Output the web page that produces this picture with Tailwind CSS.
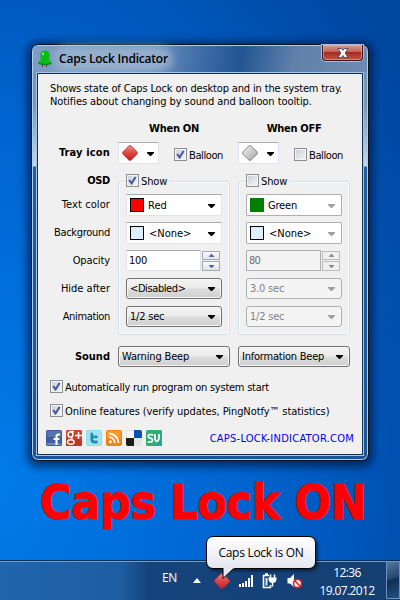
<!DOCTYPE html>
<html lang="en">
<head>
<meta charset="utf-8">
<title>Caps Lock Indicator</title>
<script src="https://cdn.jsdelivr.net/npm/@tailwindcss/browser@4"></script>
</head>
<body class="font-['DejaVu_Sans_Condensed','DejaVu_Sans',sans-serif] text-[11px] leading-[13px] text-black">
<svg class="absolute w-0 h-0">
  <defs>
    <linearGradient id="red" x1="0" y1="0" x2="0" y2="1"><stop offset="0" stop-color="#f28e8e"/><stop offset=".45" stop-color="#e04a4a"/><stop offset="1" stop-color="#c81d1d"/></linearGradient>
    <linearGradient id="gray" x1="0" y1="0" x2="1" y2="1"><stop offset="0" stop-color="#f2f2f2"/><stop offset="1" stop-color="#a2a2a2"/></linearGradient>
    <symbol id="check" viewBox="0 0 13 13"><path d="M3.2 6 L5.6 9.4 L9.6 3" fill="none" stroke="#4257a0" stroke-width="2"/></symbol>
    <symbol id="arrow" viewBox="0 0 7 4"><path d="M0 0H7V1L4 4H3L0 1Z" fill="currentColor"/></symbol>
  </defs>
</svg>
<main class="relative w-[400px] h-[600px] overflow-hidden bg-[radial-gradient(ellipse_480px_720px_at_0px_480px,#007be8_0%,#0064d0_50%,#0047a0_100%)]">

  <!-- Application window -->
  <section class="absolute left-[31px] top-[44px] w-[338px] h-[417px] flex flex-col rounded-[7px] border border-[#0a1420] px-[5px] pb-[5px] shadow-[0_2px_9px_4px_rgba(0,10,40,0.6),inset_0_0_0_1px_#b4cde6] bg-[linear-gradient(180deg,#7695bc_0px,#7896bc_60px,#c4d8ec_121px,#1f5ca2_122px,#1b5499_100%)]">
    <header class="-mx-[4px] mt-[1px] h-[26px] shrink-0 flex items-start rounded-t-[5px] bg-[linear-gradient(100deg,#7f9dc2_0%,#6e90bb_35%,#3f6da8_50%,#235493_62%,#6181ab_78%,#6d8bb2_100%)]">
      <svg class="ml-[5px] mt-[4px] shrink-0" width="14" height="18" viewBox="0 0 14 18"><path d="M4.500 14V17M8.500 14V17" stroke="#444"/><path d="M2.500 4Q3 .5 7 .5Q11 .5 11.500 4V11H13.500V14Q7 15.500 .5 14V11H2.500Z" fill="#08bc10"/><path d="M4 4Q4.500 2 6 2V5H4Z" fill="#7af07a"/><path d="M.5 12.800Q7 15 13.500 12.800V14Q7 16 .5 14Z" fill="#067d0b"/></svg>
      <h1 class="ml-[7px] mt-[5px] h-[16px] leading-[16px] w-[109px] whitespace-nowrap font-['Open_Sans','Noto_Sans',sans-serif] font-semibold text-[12px] tracking-[-0.22px] rounded-full bg-[#a3bbd6]/70 shadow-[0_0_8px_5px_rgba(163,187,214,0.7)]"><span>Caps Lock Indicator</span></h1>
      <button class="ml-auto mr-[4px] -mt-[1px] w-[41px] h-[16px] flex justify-center items-center rounded-b-[4px] border border-t-0 border-[#3c1420] shadow-[0_0_0_1px_#a9bfd8,inset_0_0_0_1px_rgba(255,190,180,0.5)] bg-[linear-gradient(180deg,#d99a94_0%,#c0645a_45%,#a52c1f_50%,#c4553f_100%)]">
        <svg width="12" height="10" viewBox="0 0 12 10"><path d="M1 .5H4.500L6 2.300 7.500 .5H11L8.200 5 11 9.500H7.500L6 7.600 4.500 9.500H1L3.800 5Z" fill="#f8f8f8" stroke="#58505c"/></svg>
      </button>
    </header>

    <div class="grow mt-[1px] flex flex-col border border-[#14304f] bg-[#f0f0f0] shadow-[0_0_0_1px_#a8c6e6] pt-[8px]">
      <p class="ml-[12px] whitespace-nowrap tracking-[-0.15px]">Shows state of Caps Lock on desktop and in the system tray.<br><span class="tracking-[-0.07px]">Notifies about changing by sound and balloon tooltip.</span></p>

      <div class="mt-[14px] h-[14px] grid grid-cols-[72px_112px_112px] gap-x-2 font-bold text-center whitespace-nowrap tracking-[-0.3px]">
        <span class="col-start-2">When ON</span>
        <span>When OFF</span>
      </div>

      <!-- Tray icon -->
      <div class="mt-[6px] h-[22px] grid grid-cols-[72px_112px_112px] gap-x-2 whitespace-nowrap">
        <b class="text-right mt-[4px] tracking-[0.15px]">Tray icon</b>
        <div class="flex">
          <div class="w-[41px] h-[22px] flex items-center bg-white border border-[#e2e3ea] border-t-[#abadb3] pl-[3px]">
            <svg width="16" height="16" viewBox="0 0 16 16"><path d="M7 .8H9L15.200 7V9L9 15.200H7L.8 9V7Z" fill="url(#red)" stroke="#c03434" stroke-width=".9"/></svg>
            <svg class="ml-[9px] mt-[1px]" width="7" height="4"><use href="#arrow"/></svg>
          </div>
          <label class="ml-[15px] mt-[6px] flex h-[13px]"><span class="w-[13px] h-[13px] border border-[#8e8f8f] bg-[linear-gradient(135deg,#c8ced8,#f6f6f6)] shadow-[inset_0_0_0_1px_#f4f4f4]"><svg class="-m-px" width="13" height="13"><use href="#check"/></svg></span><span class="ml-[2px] mt-[1px] tracking-[-0.4px]">Balloon</span></label>
        </div>
        <div class="flex">
          <div class="w-[41px] h-[22px] flex items-center bg-white border border-[#e2e3ea] border-t-[#abadb3] pl-[3px]">
            <svg width="16" height="16" viewBox="0 0 16 16"><path d="M7 .8H9L15.200 7V9L9 15.200H7L.8 9V7Z" fill="url(#gray)" stroke="#7e7e7e" stroke-width=".9"/></svg>
            <svg class="ml-[9px] mt-[1px]" width="7" height="4"><use href="#arrow"/></svg>
          </div>
          <label class="ml-[15px] mt-[6px] flex h-[13px]"><span class="w-[13px] h-[13px] border border-[#8e8f8f] bg-[linear-gradient(135deg,#c8ced8,#f6f6f6)] shadow-[inset_0_0_0_1px_#f4f4f4]"></span><span class="ml-[2px] mt-[1px] tracking-[-0.4px]">Balloon</span></label>
        </div>
      </div>

      <!-- On-screen display -->
      <div class="mt-[10px] h-[161px] grid grid-cols-[72px_112px_112px] gap-x-2 whitespace-nowrap">
        <div class="flex flex-col text-right">
          <b class="h-[24px] tracking-[-0.3px]">OSD</b>
          <span class="h-[28px] tracking-[0.1px]">Text color</span>
          <span class="h-[28px] tracking-[-0.3px]">Background</span>
          <span class="h-[28px] tracking-[-0.1px]">Opacity</span>
          <span class="h-[28px]">Hide after</span>
          <span class="tracking-[-0.35px]">Animation</span>
        </div>

        <div class="mt-[7px] h-[154px] rounded-[3px] border border-[#d5dfe5] shadow-[inset_0_0_0_1px_#fafafa] px-[7px]">
          <label class="-mt-[8px] w-[44px] flex h-[13px] bg-[#f0f0f0]"><span class="shrink-0 w-[13px] h-[13px] border border-[#8e8f8f] bg-[linear-gradient(135deg,#c8ced8,#f6f6f6)] shadow-[inset_0_0_0_1px_#f4f4f4]"><svg class="-m-px" width="13" height="13"><use href="#check"/></svg></span><span class="ml-[2px] mt-[1px] tracking-[-0.1px]">Show</span></label>
          <div class="mt-[7px] h-[22px] flex items-center bg-white border border-[#e2e3ea] border-t-[#abadb3] pl-[3px] pr-[6px]"><i class="w-[14px] h-[14px] border border-black bg-[#ff0000]"></i><span class="ml-[4px]">Red</span><svg class="ml-auto mt-[2px]" width="7" height="4"><use href="#arrow"/></svg></div>
          <div class="mt-[6px] h-[22px] flex items-center bg-white border border-[#e2e3ea] border-t-[#abadb3] pl-[3px] pr-[6px]"><i class="w-[14px] h-[14px] border border-black bg-[#ddeeff]"></i><span class="ml-[5px]">&lt;None&gt;</span><svg class="ml-auto mt-[2px]" width="7" height="4"><use href="#arrow"/></svg></div>
          <div class="mt-[6px] flex h-[21px]"><span class="w-[75px] flex items-center bg-white border border-[#e2e3ea] border-t-[#abadb3] pl-[2px] tracking-[-0.3px]">100</span>
            <span class="ml-[1px] w-[18px] flex flex-col gap-[1px] pt-[0.5px] text-[#5068b0]"><i class="h-[10px] flex items-center justify-center border border-[#a6a8b4] bg-[linear-gradient(#fafafa,#e2e4ea)]"><svg class="rotate-180" width="5" height="3" viewBox="0 0 7 4"><use href="#arrow"/></svg></i><i class="h-[10px] flex items-center justify-center border border-[#a6a8b4] bg-[linear-gradient(#fafafa,#e2e4ea)]"><svg width="5" height="3" viewBox="0 0 7 4"><use href="#arrow"/></svg></i></span></div>
          <div class="mt-[7px] h-[21px] flex items-center rounded-[3px] border border-[#707070] bg-[linear-gradient(#f2f2f2_0%,#ebebeb_48%,#dddddd_52%,#cfcfcf_100%)] shadow-[inset_0_0_0_1px_#f6f6f6] pl-[3px] pr-[6px]"><span class="tracking-[-0.4px]">&lt;Disabled&gt;</span><svg class="ml-auto mt-[1px]" width="7" height="4"><use href="#arrow"/></svg></div>
          <div class="mt-[7px] h-[21px] flex items-center rounded-[3px] border border-[#707070] bg-[linear-gradient(#f2f2f2_0%,#ebebeb_48%,#dddddd_52%,#cfcfcf_100%)] shadow-[inset_0_0_0_1px_#f6f6f6] pl-[3px] pr-[6px]"><span class="tracking-[-0.2px]">1/2 sec</span><svg class="ml-auto mt-[1px]" width="7" height="4"><use href="#arrow"/></svg></div>
        </div>

        <div class="mt-[7px] h-[154px] rounded-[3px] border border-[#d5dfe5] shadow-[inset_0_0_0_1px_#fafafa] px-[7px]">
          <label class="-mt-[8px] w-[44px] flex h-[13px] bg-[#f0f0f0]"><span class="shrink-0 w-[13px] h-[13px] border border-[#8e8f8f] bg-[linear-gradient(135deg,#c8ced8,#f6f6f6)] shadow-[inset_0_0_0_1px_#f4f4f4]"></span><span class="ml-[2px] mt-[1px] tracking-[-0.1px]">Show</span></label>
          <div class="mt-[7px] h-[22px] flex items-center bg-white border border-[#afafaf] rounded-[1px] pl-[3px] pr-[6px]"><i class="w-[14px] h-[14px] bg-[#008000]"></i><span class="ml-[4px] tracking-[-0.2px]">Green</span><svg class="ml-auto mt-[2px] text-[#a0a0a0]" width="7" height="4"><use href="#arrow"/></svg></div>
          <div class="mt-[6px] h-[22px] flex items-center bg-white border border-[#afafaf] rounded-[1px] pl-[3px] pr-[6px]"><i class="w-[14px] h-[14px] border border-black bg-[#ddeeff]"></i><span class="ml-[5px]">&lt;None&gt;</span><svg class="ml-auto mt-[2px] text-[#a0a0a0]" width="7" height="4"><use href="#arrow"/></svg></div>
          <div class="mt-[6px] flex h-[21px] text-[#6d6d6d]"><span class="w-[75px] flex items-center bg-[#f4f4f4] border border-[#afafaf] pl-[2px] tracking-[-0.8px]">80</span>
            <span class="ml-[1px] w-[18px] flex flex-col gap-[1px] pt-[0.5px] text-[#8c8c8c]"><i class="h-[10px] flex items-center justify-center border border-[#bcbcbc] bg-[#f0f0f0]"><svg class="rotate-180" width="5" height="3" viewBox="0 0 7 4"><use href="#arrow"/></svg></i><i class="h-[10px] flex items-center justify-center border border-[#bcbcbc] bg-[#f0f0f0]"><svg width="5" height="3" viewBox="0 0 7 4"><use href="#arrow"/></svg></i></span></div>
          <div class="mt-[7px] h-[21px] flex items-center rounded-[3px] border border-[#adb2b5] bg-[#f4f4f4] pl-[3px] pr-[6px] text-[#838383]"><span class="tracking-[-0.2px]">3.0 sec</span><svg class="ml-auto mt-[1px] text-[#a0a0a0]" width="7" height="4"><use href="#arrow"/></svg></div>
          <div class="mt-[7px] h-[21px] flex items-center rounded-[3px] border border-[#adb2b5] bg-[#f4f4f4] pl-[3px] pr-[6px] text-[#838383]"><span class="tracking-[-0.2px]">1/2 sec</span><svg class="ml-auto mt-[1px] text-[#a0a0a0]" width="7" height="4"><use href="#arrow"/></svg></div>
        </div>
      </div>

      <!-- Sound -->
      <div class="mt-[11px] h-[21px] grid grid-cols-[72px_112px_112px] gap-x-2 whitespace-nowrap">
        <b class="text-right mt-[4px]">Sound</b>
        <div class="flex items-center rounded-[3px] border border-[#707070] bg-[linear-gradient(#f2f2f2_0%,#ebebeb_48%,#dddddd_52%,#cfcfcf_100%)] shadow-[inset_0_0_0_1px_#f6f6f6] pl-[3px] pr-[6px]"><span class="tracking-[-0.15px]">Warning Beep</span><svg class="ml-auto mt-[1px]" width="7" height="4"><use href="#arrow"/></svg></div>
        <div class="flex items-center rounded-[3px] border border-[#707070] bg-[linear-gradient(#f2f2f2_0%,#ebebeb_48%,#dddddd_52%,#cfcfcf_100%)] shadow-[inset_0_0_0_1px_#f6f6f6] pl-[3px] pr-[6px]"><span class="tracking-[-0.22px]">Information Beep</span><svg class="ml-auto mt-[1px]" width="7" height="4"><use href="#arrow"/></svg></div>
      </div>

      <label class="ml-[12px] mt-[13px] h-[13px] flex whitespace-nowrap"><span class="w-[13px] h-[13px] border border-[#8e8f8f] bg-[linear-gradient(135deg,#c8ced8,#f6f6f6)] shadow-[inset_0_0_0_1px_#f4f4f4]"><svg class="-m-px" width="13" height="13"><use href="#check"/></svg></span><span class="ml-[2px] mt-[1px] tracking-[-0.24px]">Automatically run program on system start</span></label>
      <label class="ml-[12px] mt-[11px] h-[13px] flex whitespace-nowrap"><span class="w-[13px] h-[13px] border border-[#8e8f8f] bg-[linear-gradient(135deg,#c8ced8,#f6f6f6)] shadow-[inset_0_0_0_1px_#f4f4f4]"><svg class="-m-px" width="13" height="13"><use href="#check"/></svg></span><span class="ml-[2px] mt-[1px] tracking-[-0.08px]">Online features (verify updates, PingNotfy™ statistics)</span></label>

      <!-- Share links -->
      <footer class="mt-[13px] h-[16px] flex items-center ml-[8px] mr-[8px] gap-[4px]">
        <svg width="16" height="16" viewBox="0 0 16 16"><rect width="16" height="16" rx="1.500" fill="#3e5d9e"/><path d="M1 1H15V7H1Z" fill="#5874ad"/><path d="M1 13H15V15H1Z" fill="#6d89bf"/><path d="M14 4.500H12.500Q10.500 4.500 10.500 6.500V15M7.500 9H13.500" fill="none" stroke="#fff" stroke-width="2.100"/></svg>
        <svg width="16" height="16" viewBox="0 0 16 16"><rect width="16" height="16" rx="1.500" fill="#d03e2c"/><path d="M0 9H16V14.500Q16 16 14.500 16H0Z" fill="#c23424"/><g fill="none" stroke="#fff" stroke-width="1.500"><ellipse cx="4.500" cy="4.500" rx="2.400" ry="2.700"/><path d="M4 1.500H8M6.200 7Q4.500 8.300 6.500 9.500"/><ellipse cx="4.800" cy="12" rx="3.300" ry="2.300"/><path d="M12.500 2V9M9 5.500H16"/></g></svg>
        <svg width="16" height="16" viewBox="0 0 16 16"><rect width="16" height="16" rx="2" fill="#8edbea"/><rect x="1" y="1" width="14" height="14" rx="1" fill="#a5e4ef"/><path d="M5.800 4V9.500Q5.800 12 8.500 12H10.500M5.800 6.800H10.500" fill="none" stroke="#238db5" stroke-width="2.800" stroke-linecap="round"/></svg>
        <svg width="16" height="16" viewBox="0 0 16 16"><rect width="16" height="16" rx="2" fill="#f58113"/><rect x="1" y="1" width="14" height="7" fill="#fc9a2c"/><circle cx="4.300" cy="11.800" r="1.500" fill="#fff"/><path d="M3 7.200A5.800 5.800 0 0 1 8.800 13M3 3.500A9.500 9.500 0 0 1 12.500 13" fill="none" stroke="#fff" stroke-width="1.800"/></svg>
        <svg width="16" height="16" viewBox="0 0 16 16"><rect width="16" height="16" rx="2" fill="#e4e4e4"/><path d="M8 0H14Q16 0 16 2V8H8Z" fill="#0b4fb0"/><path d="M0 8H8V16H2Q0 16 0 14Z" fill="#1c1c1c"/><path d="M1 1H8V8H1Z" fill="#f6f6f6"/></svg>
        <svg width="16" height="16" viewBox="0 0 16 16"><rect width="16" height="16" rx="1.500" fill="#2fae72"/><path d="M14.500 0Q16 0 16 1.500V16H10L14.500 11Z" fill="#22a3b0"/><path d="M7 5.500Q6.500 4.500 4.500 4.500Q2.300 4.500 2.300 6.200Q2.300 7.800 4.500 8.200Q6.500 8.600 6.500 10.300Q6.500 12 4.300 12H1.500M9 4V9.500L10.500 11.500Q13 10.500 13 8V4" fill="none" stroke="#fff" stroke-width="1.700"/></svg>
        <a class="ml-auto text-[#0000ee] whitespace-nowrap tracking-[0.25px]">CAPS-LOCK-INDICATOR.COM</a>
      </footer>
    </div>
  </section>

  <!-- On-screen message -->
  <div class="absolute left-[40px] top-[474px] h-[56px] leading-[56px] whitespace-nowrap font-bold text-[48px] tracking-[-0.45px] text-[#ff0000] [-webkit-text-stroke:0.9px_#ff0000]">Caps Lock ON</div>

  <!-- Taskbar -->
  <nav class="absolute left-0 top-[560px] w-[400px] h-[40px] flex border-t border-[#06305f] shadow-[inset_0_1px_0_#6ea0cf] bg-[linear-gradient(90deg,#1f66ae_0%,#1d5da2_30%,#15447c_37%,#143f72_100%)] text-white font-['Open_Sans','Noto_Sans',sans-serif] text-[12px]">
    <span class="ml-[162px] w-[16px] mt-[10px] leading-[14px] text-[12px] tracking-[-0.4px]">EN</span>
    <svg class="ml-[15px] mt-[17px]" width="8" height="6" viewBox="0 0 8 6"><path d="M4 0L8 5H0Z" fill="#fff"/></svg>
    <svg class="ml-[13px] mt-[12px]" width="16" height="16" viewBox="0 0 16 16"><path d="M7 .8H9L15.200 7V9L9 15.200H7L.8 9V7Z" fill="url(#red)" stroke="#c03434" stroke-width=".9"/></svg>
    <svg class="ml-[9px] mt-[14px]" width="15" height="12" viewBox="0 0 15 12"><path d="M0 9H2V12H0ZM3 8H5V12H3ZM6 6H8V12H6ZM9 3H11V12H9ZM12 0H14V12H12Z" fill="#fff"/></svg>
    <svg class="ml-[8px] mt-[12px]" width="16" height="16" viewBox="0 0 16 16"><path d="M7 2.500H1.500V14.500H8.500V12M3 1H6" fill="none" stroke="#fff" stroke-width="1.600"/><path d="M6.500 4.500H14.500V6.500Q14 10 10.500 10Q7 10 6.500 6.500Z" fill="#fff"/><path d="M8.500 1.500V5M12.500 1.500V5M10.500 9V13.500" fill="none" stroke="#fff" stroke-width="1.500"/><path d="M3.500 5H5.500V12.500H3.500Z" fill="#dfe8f2"/></svg>
    <svg class="ml-[9px] mt-[12px]" width="16" height="16" viewBox="0 0 16 16"><path d="M.5 5H3L7 1V14L3 10.500H.5Z" fill="#fff"/><circle cx="10.500" cy="10.500" r="4" fill="#fff" stroke="#e02020" stroke-width="1.600"/><path d="M7.800 7.800L13.200 13.200" stroke="#e02020" stroke-width="1.600"/></svg>
    <time class="ml-[13px] w-[62px] mt-[3px] text-center leading-[18px] whitespace-nowrap tracking-[-0.6px]">12:36<br>19.07.2012</time>
    <i class="ml-auto w-[14px] h-[38px] border border-[#6f93b8] bg-[linear-gradient(160deg,#56789f_0%,#23456f_45%,#0f2e55_50%,#24507f_100%)]"></i>
  </nav>

  <!-- Balloon tooltip -->
  <aside class="absolute left-[206px] top-[536px] w-[110px] h-[33px] flex justify-center rounded-[7px] border border-black bg-[linear-gradient(#ffffff,#e6e6f0)] shadow-[2px_2px_3px_rgba(0,0,0,0.5)] font-['Open_Sans','Noto_Sans',sans-serif] text-[12px]">
    <span class="mt-[8px] leading-[16px] whitespace-nowrap tracking-[-0.27px]">Caps Lock is ON</span>
    <svg class="absolute left-[15px] top-[30px]" width="14" height="14" viewBox="0 0 14 14"><path d="M1 0V11.500L12.500 1" fill="#e8e8f1"/><path d="M1 1V11.500L11.500 1.500" fill="none" stroke="#000"/></svg>
  </aside>
</main>
</body>
</html>
